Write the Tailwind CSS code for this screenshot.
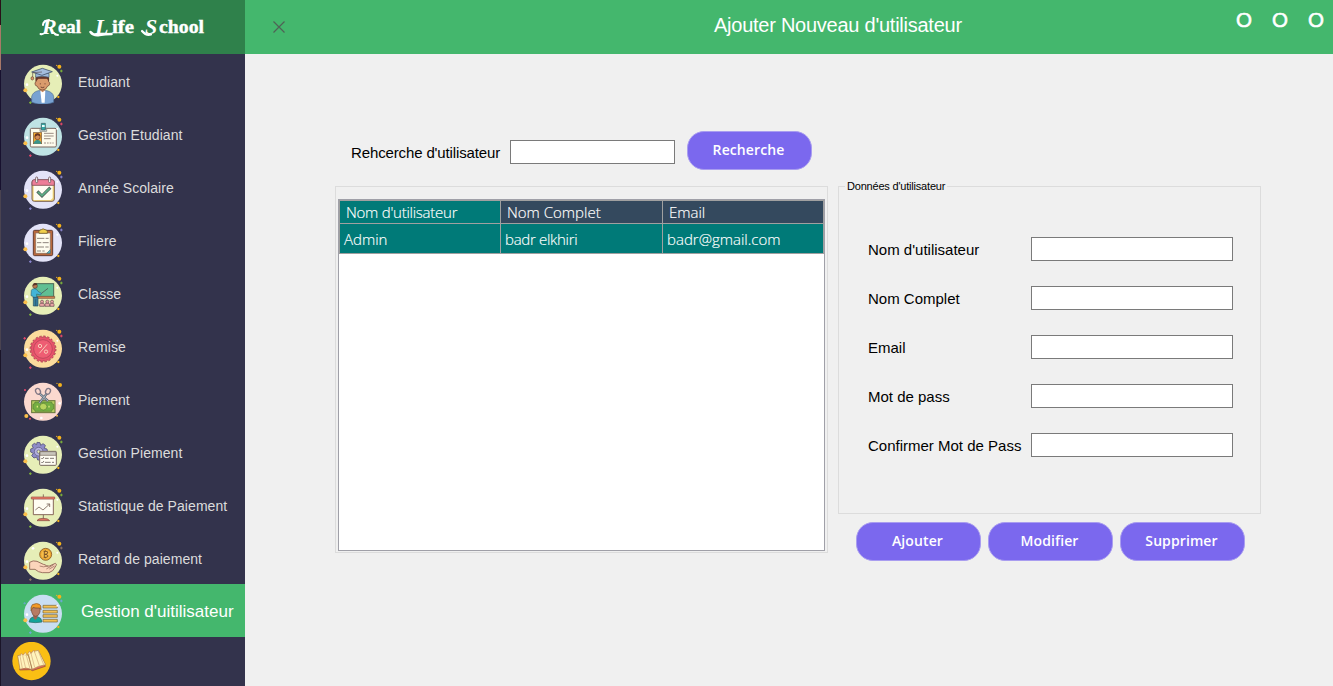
<!DOCTYPE html>
<html lang="fr">
<head>
<meta charset="utf-8">
<title>Real Life School</title>
<script src="https://cdn.jsdelivr.net/npm/@tailwindcss/browser@4"></script>
</head>
<body class="w-[1333px] h-[686px] overflow-hidden bg-[#f0f0f0] flex font-['Liberation_Sans',Arial,sans-serif]">

<svg class="hidden">
  <symbol id="dots" viewBox="0 0 120 120">
    <circle cx="109" cy="8" r="6" fill="#f5b31c"/><circle cx="101" cy="4" r="2" fill="#f5b31c"/>
    <circle cx="7" cy="79" r="6" fill="#fbbf4a"/><circle cx="106" cy="99" r="3.5" fill="#f5b31c"/>
    <circle cx="12" cy="62" r="4" fill="#fff"/><circle cx="103" cy="35" r="3" fill="#fff"/>
    <path d="M115 17v8M111 21h8M22 112v8M18 116h8" stroke="currentColor" stroke-width="3"/>
  </symbol>
</svg>

<div class="w-px h-full shrink-0 bg-[#1a1428] flex flex-col"><div class="h-[25px] bg-[#2a1018]"></div><div class="h-[45px] bg-[#a87868]"></div><div class="h-[120px] bg-[#17102e]"></div><div class="h-[160px] bg-[#4a4350]"></div></div>

<aside class="w-[244px] h-full shrink-0 bg-[#33334c] text-[#dcdcdc] text-[14px] tracking-[0.06px] flex flex-col">
  <div class="h-[54px] bg-[#2f814b] shrink-0 tracking-normal">
    <svg class="w-[244px] h-[54px] font-['Liberation_Serif',serif] font-bold" viewBox="1 0 244 54" fill="#fff">
      <g font-size="22" font-style="italic"><text x="42" y="34">R</text><text x="95" y="34">L</text><text x="145" y="34">S</text></g>
      <g font-size="19" stroke="#fff" stroke-width=".4"><text x="58" y="33" textLength="23" lengthAdjust="spacingAndGlyphs">eal</text><text x="112" y="33" textLength="22" lengthAdjust="spacingAndGlyphs">ife</text><text x="159" y="33" textLength="45" lengthAdjust="spacingAndGlyphs">chool</text></g>
      <g fill="none" stroke="#fff" stroke-width="2" stroke-linecap="round"><path d="M43 25q0-4 6-5M40.500 34q3 1 6-3M54 33q1 2 4 2"/><path d="M90.500 32q3 4 9 3t12-1" stroke-width="2.600"/><path d="M142 31q4 5 9 3.500" stroke-width="2.200"/></g>
    </svg>
  </div>

  <nav class="flex flex-col">
    <a class="h-[53px] pl-[22px] flex">
      <svg class="size-10 mt-[9.5px] text-[#7fb53a]" viewBox="0 0 120 120"><circle cx="60" cy="59.500" r="57" fill="#e6eeb7"/>
        <path d="M26 115V98q3-14 20-18h26q18 5 20 18v17q-32 12-66 0" fill="#78a2d2" stroke="#4b6c94" stroke-width="2"/>
        <path d="M52 80h15l-2 36H56z" fill="#fff"/><path d="M50 68h17v10l-8 7-9-7z" fill="#c98b60"/>
        <path d="M39 42h38v12q4 0 3 6t-6 6q-4 12-16 12T42 66q-5 0-6-6t3-6z" fill="#d99b6c" stroke="#6a4030" stroke-width="2"/>
        <path d="M38 53V37h40v16l-6-9H46z" fill="#653528"/><path d="M52 58v3M66 58v3M53 69q6 4 11 0" stroke="#5a3025" stroke-width="2.500" fill="none"/>
        <path d="M38 28v12q20-6 40 0V28z" fill="#9bb9dc" stroke="#44546d" stroke-width="2"/>
        <path d="M26 24 58 13l30 10-31 11z" fill="#a4bddd" stroke="#44546d" stroke-width="2.500"/><path d="M57 24 29 26v13" stroke="#5b4a50" stroke-width="2" fill="none"/><ellipse cx="28" cy="43" rx="4" ry="5" fill="#d89a68" stroke="#6a4030" stroke-width="2"/>
        <use href="#dots"/></svg>
      <span class="pl-[15px] pt-[20px] leading-[17px] whitespace-nowrap">Etudiant</span></a>
    <a class="h-[53px] pl-[22px] flex">
      <svg class="size-10 mt-[9.5px] text-[#e8486a]" viewBox="0 0 120 120"><circle cx="60" cy="59.500" r="57" fill="#bfe3e4"/>
        <rect x="22" y="34" width="78" height="56" rx="4" fill="#fdfbec" stroke="#7b675e" stroke-width="3"/>
        <path d="M51 43v-9h20v9z" fill="#e0e5e5" stroke="#6b7470" stroke-width="2"/><path d="M55 19h12v20H55z" fill="#35a9a6" stroke="#37585a" stroke-width="2"/><path d="M57 24h8v6h-8z" fill="#e8fffc"/>
        <rect x="31" y="47" width="25" height="33" fill="#f2ab31" stroke="#765337" stroke-width="2"/><path d="M32 80q1-10 11-11t12 11z" fill="#39958c"/><circle cx="43.500" cy="60" r="8" fill="#d38c58" stroke="#6c3825" stroke-width="2"/><path d="M35 59q0-11 9-10t8 9l-8-3z" fill="#693420"/>
        <path d="M63 49h29M63 57h29M63 65h20M63 78h6m3 0h5m3 0h5m3 0h4" stroke="#9a8c82" stroke-width="3"/>
        <use href="#dots"/></svg>
      <span class="pl-[15px] pt-[20px] leading-[17px] whitespace-nowrap">Gestion Etudiant</span></a>
    <a class="h-[53px] pl-[22px] flex">
      <svg class="size-10 mt-[9.5px] text-[#8b86d0]" viewBox="0 0 120 120"><circle cx="60" cy="59.500" r="57" fill="#e3e3f8"/>
        <rect x="27" y="30" width="67" height="64" rx="7" fill="#f3d778" stroke="#7b6252" stroke-width="3"/><path d="M32 46h57v38l-6 6H32z" fill="#fffdf3"/>
        <path d="M27 46V36q0-7 7-7h53q7 0 7 7v10z" fill="#ed7e98" stroke="#81515a" stroke-width="2.500"/>
        <rect x="38" y="21" width="6" height="17" rx="3" fill="#fff" stroke="#6d5359" stroke-width="2.500"/><rect x="77" y="21" width="6" height="17" rx="3" fill="#fff" stroke="#6d5359" stroke-width="2.500"/>
        <path d="m43 64 14 14 25-25" stroke="#50635a" stroke-width="9" fill="none"/><path d="m45 66 12 11 23-22" stroke="#5dae85" stroke-width="5" fill="none"/>
        <use href="#dots"/></svg>
      <span class="pl-[15px] pt-[20px] leading-[17px] whitespace-nowrap">Année Scolaire</span></a>
    <a class="h-[53px] pl-[22px] flex">
      <svg class="size-10 mt-[9.5px] text-[#8b86d0]" viewBox="0 0 120 120"><circle cx="60" cy="59.500" r="57" fill="#e3e3f8"/>
        <rect x="31" y="22" width="58" height="76" rx="4" fill="#b8683d" stroke="#643d32" stroke-width="3"/><path d="M38 30h44v52l-9 9H38z" fill="#fffdf0" stroke="#856657" stroke-width="2"/><path d="M82 80v11h-11z" fill="#5ab2c1" stroke="#31626d" stroke-width="1.500"/>
        <path d="M48 31v-6q2-5 7-5 5-5 11 0 6 0 7 5v6z" fill="#f1cf4c" stroke="#75602c" stroke-width="2.500"/>
        <path d="M42 46h22m4 0h9M42 59h13m4 0h18M42 72h21m4 0h10M42 84h12m4 0h7" stroke="#776a64" stroke-width="2.500"/>
        <use href="#dots"/></svg>
      <span class="pl-[15px] pt-[20px] leading-[17px] whitespace-nowrap">Filiere</span></a>
    <a class="h-[53px] pl-[22px] flex">
      <svg class="size-10 mt-[9.5px] text-[#7fb53a]" viewBox="0 0 120 120"><circle cx="60" cy="59.500" r="57" fill="#e6eeb7"/>
        <rect x="35" y="23" width="57" height="40" fill="#5fbf93" stroke="#4a6655" stroke-width="3"/><path d="M43 61h52v6H43z" fill="#d38754" stroke="#75513a" stroke-width="2"/>
        <path d="m53 54 22-17" stroke="#4d5d56" stroke-width="2.500"/><circle cx="36" cy="30" r="7" fill="#b87a50" stroke="#5e382c" stroke-width="2"/><path d="M29 29q1-9 8-8 6 1 6 5z" fill="#573428"/>
        <path d="M25 43q2-5 9-5 8 0 11 8l10 6-2 5-12-3v11H30v-4l-6-2z" fill="#43b5d7" stroke="#326779" stroke-width="2"/><path d="M31 64h14v26H31z" fill="#347f9e" stroke="#285062" stroke-width="2"/><path d="M38 70v20" stroke="#285062" stroke-width="2"/>
        <g fill="#e9a5a6" stroke="#654a4e" stroke-width="2"><path d="M50 91v-6q0-4 7-4t7 4v6zM66 91v-6q0-4 7-4t7 4v6zM81 91v-6q0-4 6-4t6 4v6z"/><circle cx="57" cy="77" r="4.500"/><circle cx="73" cy="77" r="4.500"/><circle cx="87" cy="77" r="4.500"/></g>
        <use href="#dots"/></svg>
      <span class="pl-[15px] pt-[20px] leading-[17px] whitespace-nowrap">Classe</span></a>
    <a class="h-[53px] pl-[22px] flex">
      <svg class="size-10 mt-[9.5px] text-[#e8486a]" viewBox="0 0 120 120"><circle cx="60" cy="59.500" r="57" fill="#fbdc9d"/>
        <circle cx="60" cy="60" r="36" fill="#e9536b" stroke="#8c434b" stroke-width="2"/><circle cx="60" cy="60" r="37" fill="none" stroke="#e9536b" stroke-width="5" stroke-dasharray="7 4.600"/><circle cx="60" cy="60" r="39" fill="none" stroke="#8c434b" stroke-width="2" stroke-dasharray="7 5.250"/>
        <circle cx="60" cy="60" r="28" fill="#ee5d73" stroke="#a94154" stroke-width="2"/><path d="m49 73 23-27" stroke="#f9cdb8" stroke-width="3"/><circle cx="51" cy="51" r="5" fill="none" stroke="#f9cdb8" stroke-width="3"/><circle cx="69" cy="68" r="5" fill="none" stroke="#f9cdb8" stroke-width="3"/>
        <path d="M5 24v8M1 28h8" stroke="#e8486a" stroke-width="3"/><use href="#dots"/></svg>
      <span class="pl-[15px] pt-[20px] leading-[17px] whitespace-nowrap">Remise</span></a>
    <a class="h-[53px] pl-[22px] flex">
      <svg class="size-10 mt-[9.5px]" viewBox="0 0 120 120"><circle cx="60" cy="59.500" r="57" fill="#fbd9cf"/>
        <rect x="26" y="56" width="70" height="36" fill="#b7cf61" stroke="#657439" stroke-width="3"/><path d="M36 60h50q0 7 6 7v14q-6 0-6 7H36q0-7-6-7V67q6 0 6-7" fill="#74ae42" stroke="#557b35" stroke-width="2"/><ellipse cx="61" cy="74" rx="11" ry="10" fill="#b8d45d" stroke="#557b35" stroke-width="2"/><path d="M41 74h4m31 0h4" stroke="#dce87d" stroke-width="5"/>
        <path d="m50 35 25 22M71 35 49 63" stroke="#626b78" stroke-width="7"/><path d="m50 35 25 22M71 35 49 63" stroke="#adbac5" stroke-width="3"/>
        <ellipse cx="45" cy="28" rx="7" ry="9" fill="none" stroke="#827886" stroke-width="4" transform="rotate(-25 45 28)"/><ellipse cx="75" cy="28" rx="7" ry="9" fill="none" stroke="#827886" stroke-width="4" transform="rotate(25 75 28)"/>
        <circle cx="111" cy="9" r="6" fill="#f5b31c"/><circle cx="102" cy="4" r="2" fill="#f5b31c"/><circle cx="10" cy="102" r="6" fill="#fbbf4a"/><circle cx="21" cy="110" r="3" fill="#e8486a"/><circle cx="6" cy="24" r="3" fill="#e8486a"/><circle cx="55" cy="108" r="4" fill="#fff"/><circle cx="110" cy="64" r="4" fill="#fff"/><circle cx="102" cy="101" r="3" fill="#fbbf4a"/></svg>
      <span class="pl-[15px] pt-[20px] leading-[17px] whitespace-nowrap">Piement</span></a>
    <a class="h-[53px] pl-[22px] flex">
      <svg class="size-10 mt-[9.5px] text-[#7fb53a]" viewBox="0 0 120 120"><circle cx="60" cy="59.500" r="57" fill="#e6eeb7"/>
        <path d="m42 22 9 1 2 8 7-5 7 5-3 9 8 2 2 10-8 3 4 8-6 6-8-3-3 9h-9l-3-9-8 3-7-7 5-7-8-4v-9l8-3-4-8 7-6 7 4z" fill="#8e8bc7" stroke="#57547c" stroke-width="2.500"/><circle cx="47" cy="50" r="13" fill="#b5b2df" stroke="#57547c" stroke-width="2"/><circle cx="47" cy="50" r="5" fill="#e6eeb7" stroke="#57547c" stroke-width="2"/>
        <rect x="50" y="49" width="50" height="42" rx="3" fill="#fffdf3" stroke="#77695f" stroke-width="3"/><path d="M51 50h48v11H51z" fill="#c8c4bb" stroke="#77695f" stroke-width="2"/><path d="m55 69 3 3 5-6m3 4h11m4 0h12M55 81l3 3 5-6m3 4h17m4 0h6" stroke="#685e5a" stroke-width="2.500" fill="none"/>
        <use href="#dots"/></svg>
      <span class="pl-[15px] pt-[20px] leading-[17px] whitespace-nowrap">Gestion Piement</span></a>
    <a class="h-[53px] pl-[22px] flex">
      <svg class="size-10 mt-[9.5px] text-[#7fb53a]" viewBox="0 0 120 120"><circle cx="60" cy="59.500" r="57" fill="#e6eeb7"/>
        <path d="M61 19v74" stroke="#775c51" stroke-width="2.500"/><path d="M31 32h60v48H31z" fill="#fffdf3" stroke="#87685a" stroke-width="3"/><path d="M25 27h70v6H25z" fill="#ed7c68" stroke="#975046" stroke-width="2"/><path d="M42 98q3-7 18-7t20 7z" fill="#de755f" stroke="#824b42" stroke-width="2"/><path d="m37 66 11-9 12 9 20-18m-9 0h9v9" stroke="#7a6559" stroke-width="2.500" fill="none"/>
        <use href="#dots"/></svg>
      <span class="pl-[15px] pt-[20px] leading-[17px] whitespace-nowrap">Statistique de Paiement</span></a>
    <a class="h-[53px] pl-[22px] flex">
      <svg class="size-10 mt-[9.5px] text-[#8b7468]" viewBox="0 0 120 120"><circle cx="60" cy="59.500" r="57" fill="#e6eeb7"/>
        <circle cx="68" cy="40" r="18" fill="#eda830" stroke="#8a5a26" stroke-width="2.500"/><circle cx="68" cy="40" r="13" fill="#f7bd4b"/><path d="M64 31v18M62 31h7q7 0 5 5-1 4-9 4 10 0 10 5 0 4-6 4h-7M67 28v3m0 18v3" stroke="#6a4420" stroke-width="2.500" fill="none"/>
        <path d="M20 64q10-7 22-3l19 9q9 1 9 5h9l18-8q5 1 2 7-9 19-21 21H58q-12-1-22-10H20z" fill="#fbd5bb" stroke="#8b5f50" stroke-width="2.500"/><path d="M50 75q10 5 25 0m4 9 16-9m-25 9 22-13" stroke="#8b5f50" stroke-width="2" fill="none"/>
        <circle cx="30" cy="22" r="4" fill="#fff"/><use href="#dots"/></svg>
      <span class="pl-[15px] pt-[20px] leading-[17px] whitespace-nowrap">Retard de paiement</span></a>
    <a class="h-[53px] pl-[22px] flex bg-[#44b76d] text-white">
      <svg class="size-10 mt-[9.5px] text-[#70a6d8]" viewBox="0 0 120 120"><circle cx="60" cy="59.500" r="57" fill="#c9def2"/>
        <path d="M18 84q2-14 14-16h12q12 3 13 16-20 4-39 0" fill="#12a49a" stroke="#2c6966" stroke-width="2"/><path d="M31 60h12v12l-6 6-6-6z" fill="#9c6550"/><path d="M25 41h26v13q-4 13-13 13T26 54z" fill="#b77b63" stroke="#724839" stroke-width="2"/><path d="M24 50q-1-13 4-18 14-6 21-1 6 2 5 16l-4-5q-13 1-20-2z" fill="#f39928" stroke="#805228" stroke-width="2"/>
        <path d="M60 34h43v8H60zM60 49h43v8H60zM60 62h43v8H60zM60 76h43v8H60z" fill="#f4c051" stroke="#77633a" stroke-width="2"/>
        <path d="M5 24v7M1 28h8" stroke="#70a6d8" stroke-width="2"/><use href="#dots"/></svg>
      <span class="pl-[18px] pt-[18px] text-[17px] leading-5 tracking-normal whitespace-nowrap">Gestion d'uitilisateur</span></a>
  </nav>
  <svg class="ml-[10.5px] mt-[5px] size-[39px] shrink-0" viewBox="0 0 117 117"><circle cx="58.500" cy="57" r="57.500" fill="#fabf14"/>
    <path d="m23 84 33-1 5 3 39-13-3-6-71 10z" fill="#e16e55" stroke="#8a4638" stroke-width="2"/>
    <path d="m17 41 7 41q20-8 36 1l-10-43q-16-6-33 1M48 38q14-12 31-13l22 43q-23 3-40 14z" fill="#fff4bc" stroke="#a87b51" stroke-width="2"/>
    <path d="m24 42 7 37m1-39 9 39m2-38 11 39m3-46 11 42m-1-48 15 43m-4-46 17 43" stroke="#d3a878" stroke-width="2" fill="none"/><path d="m24 42 4-8 5 6 7-9 5 8 8-12 4 8 8-11 3 8" stroke="#c9884f" stroke-width="2" fill="#fff4bc"/></svg>
</aside>

<main class="flex-1 flex flex-col">
  <header class="h-[54px] bg-[#44b76d] text-white flex shrink-0">
    <svg class="size-3 ml-7 mt-[21px]" viewBox="0 0 12 12"><path d="M.5.500l11 11M11.500.500l-11 11" stroke="#4f6256" stroke-width="1.200"/></svg>
    <h1 class="ml-[429px] mt-[13px] w-[300px] text-[20px] leading-6 tracking-[-0.25px] whitespace-nowrap">Ajouter Nouveau d'utilisateur</h1>
    <div class="ml-[222px] mt-2 flex text-[20.500px] leading-6 [-webkit-text-stroke:0.6px_white]"><span class="w-9">O</span><span class="w-9">O</span><span>O</span></div>
  </header>

  <div class="flex">
    <section class="ml-[90px] mt-[77px] w-[493px]">
      <div class="flex h-[39px] pl-4">
        <label class="w-[159px] pt-[13px] text-[15px] leading-[17px] tracking-[-0.13px] whitespace-nowrap">Rehcerche d'utilisateur</label>
        <input class="mt-[9px] h-6 w-[165px] bg-white border border-[#7a7a7a]">
        <button class="ml-3 w-[125px] h-[39px] rounded-[17px] bg-[#7b68ee] border border-[#a99df0] text-white font-['Open_Sans',sans-serif] font-semibold text-[14px] leading-4 tracking-[0.1px] pr-[2px] pb-[2px]">Recherche</button>
      </div>
      <div class="mt-4 h-[367px] border border-[#dcdcdc] pl-[2px] pt-3">
        <div class="w-[487px] h-[352px] bg-white border border-[#a0a0a8]">
          <div class="grid grid-cols-[160px_161px_160px] gap-px bg-[#a0a0a0] p-px border-r border-[#a0a0a0] font-['Open_Sans',sans-serif] font-light text-[15px] leading-[22px] text-white [-webkit-text-stroke:0.15px_white] whitespace-nowrap w-[485px] h-[54px] grid-rows-[22px_29px]">
            <div class="bg-[#007a78] pl-[6px] tracking-[-0.25px]">Nom d'utilisateur</div><div class="bg-[#34495e] pl-[6px]">Nom Complet</div><div class="bg-[#34495e] pl-[6px]">Email</div>
            <div class="bg-[#007a78] pl-1 pt-[4px]">Admin</div><div class="bg-[#007a78] pl-1 pt-[4px] tracking-[-0.3px]">badr elkhiri</div><div class="bg-[#007a78] pl-1 pt-[4px]">badr@gmail.com</div>
          </div>
        </div>
      </div>
    </section>

    <section class="ml-[10px] mt-[126px]">
      <fieldset class="w-[423px] h-[334px] border border-[#dcdcdc] pl-[29px] pr-[27px]">
        <legend class="-ml-[23px] px-[2px] w-[102px] h-3 text-[11px] leading-3 tracking-[-0.2px] whitespace-nowrap">Données d'utilisateur</legend>
        <div class="flex flex-col gap-[25px] pt-[45px] text-[15px]">
          <div class="flex h-6"><label class="w-[163px] pt-[4px] leading-[17px] whitespace-nowrap">Nom d'utilisateur</label><input class="w-[202px] h-6 bg-white border border-[#7a7a7a]"></div>
          <div class="flex h-6"><label class="w-[163px] pt-[4px] leading-[17px] whitespace-nowrap">Nom Complet</label><input class="w-[202px] h-6 bg-white border border-[#7a7a7a]"></div>
          <div class="flex h-6"><label class="w-[163px] pt-[4px] leading-[17px] whitespace-nowrap">Email</label><input class="w-[202px] h-6 bg-white border border-[#7a7a7a]"></div>
          <div class="flex h-6"><label class="w-[163px] pt-[4px] leading-[17px] whitespace-nowrap">Mot de pass</label><input class="w-[202px] h-6 bg-white border border-[#7a7a7a]"></div>
          <div class="flex h-6"><label class="w-[163px] pt-[4px] leading-[17px] whitespace-nowrap">Confirmer Mot de Pass</label><input class="w-[202px] h-6 bg-white border border-[#7a7a7a]"></div>
        </div>
      </fieldset>
      <div class="flex gap-[7px] pl-[18px] mt-2 text-white font-['Open_Sans',sans-serif] font-semibold text-[14px] leading-4 tracking-[0.1px]">
        <button class="w-[125px] h-[39px] rounded-[17px] bg-[#7b68ee] border border-[#a99df0] pr-[2px] pb-[2px]">Ajouter</button>
        <button class="w-[125px] h-[39px] rounded-[17px] bg-[#7b68ee] border border-[#a99df0] pr-[2px] pb-[2px]">Modifier</button>
        <button class="w-[125px] h-[39px] rounded-[17px] bg-[#7b68ee] border border-[#a99df0] pr-[2px] pb-[2px]">Supprimer</button>
      </div>
    </section>
  </div>
</main>
</body>
</html>
